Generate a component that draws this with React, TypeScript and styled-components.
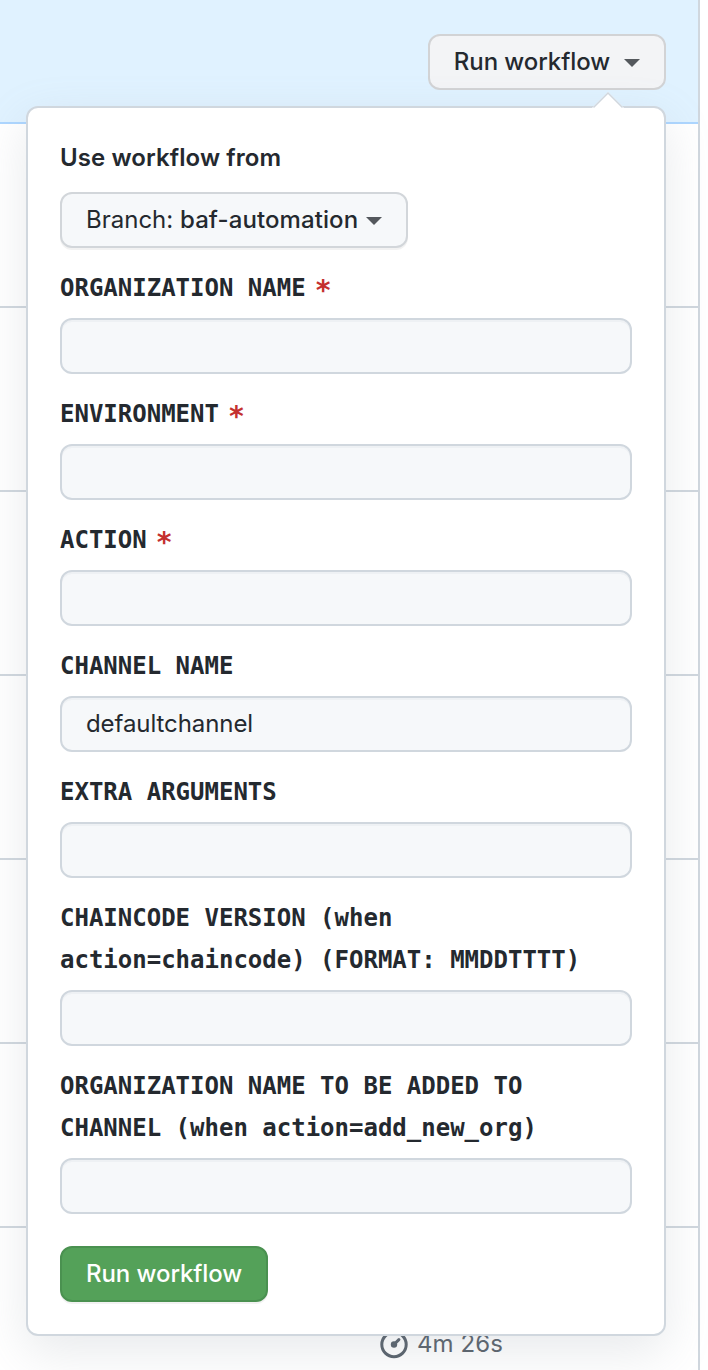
import React from "react";
import styled, { createGlobalStyle } from "styled-components";

const sans = `Inter, "Liberation Sans", sans-serif`;
const mono = `"DejaVu Sans Mono", "Liberation Mono", monospace`;

const GlobalStyle = createGlobalStyle`
  *, *::before, *::after { box-sizing: border-box; }
  body { margin: 0; background: #fff; color: #24292f; font: 24px/36px ${sans}; }
`;

const Page = styled.main`
  height: 1370px;
  overflow: hidden;
  padding-right: 8px;
`;

const RunList = styled.section`
  height: 1372px;
  border-right: 2px solid #d0d7de;
`;

const Banner = styled.header`
  position: relative;
  display: flex;
  justify-content: flex-end;
  align-items: flex-start;
  height: 124px;
  padding: 34px 32px 0 0;
  background: #e0f2ff;
  border-bottom: 2px solid #add6ff;
`;

const RunRow = styled.div`
  height: 184px;
  padding: 98px 0 0 380px;
  border-bottom: 2px solid #d0d7de;
`;

const Duration = styled.div`
  display: flex;
  align-items: center;
  gap: 9px;
  color: #57606a;
  letter-spacing: 0.1px;
`;

const Button = styled.button<{ $tone?: "muted" | "plain" | "primary" }>`
  display: flex;
  align-items: center;
  height: 56px;
  padding: 0 24px;
  border: 2px solid ${(p) => (p.$tone === "primary" ? "#4a9150" : p.$tone === "muted" ? "#d2d3d5" : "#d2d6da")};
  border-radius: 12px;
  background: ${(p) => (p.$tone === "primary" ? "#54a159" : p.$tone === "muted" ? "#f3f4f6" : "#f6f8fa")};
  box-shadow: ${(p) => (p.$tone === "muted" ? "none" : "0 2px 0 rgba(27, 31, 36, 0.06)")};
  color: ${(p) => (p.$tone === "primary" ? "#fff" : "#24292f")};
  font: ${(p) => (p.$tone === "plain" ? 400 : 500)} 24px/36px ${sans};
  letter-spacing: ${(p) => (p.$tone === "plain" ? 0 : -0.07)}px;
  white-space: pre;
`;

const BranchName = styled.span`
  font-weight: 500;
  letter-spacing: 0.1px;
`;

const Caret = styled.span<{ $gap: number }>`
  margin-left: ${(p) => p.$gap}px;
  border: 8px solid transparent;
  border-top-color: #54585d;
  border-bottom: 0;
  transform: translateY(1px);
`;

const Popover = styled.form`
  position: absolute;
  top: 106px;
  left: 26px;
  width: 640px;
  height: 1230px;
  padding: 32px;
  background: #fff;
  border: 2px solid #d0d7de;
  border-radius: 12px;
  box-shadow: 0 16px 48px rgba(140, 149, 159, 0.2);
`;

const Pointer = styled.svg`
  position: absolute;
  top: -16px;
  right: 40px;
`;

const Heading = styled.div`
  margin-bottom: 16px;
  font-weight: 600;
  letter-spacing: 0.09px;
`;

const Field = styled.label`
  display: block;
  margin-top: 19px;
`;

const FieldName = styled.span`
  display: block;
  margin-bottom: 9px;
  font: bold 24px/42px ${mono};
`;

const Required = styled.span`
  margin-left: 9px;
  color: #c4302f;
  font-size: 28px;
  line-height: 0;
  vertical-align: -4px;
`;

const Input = styled.input`
  display: block;
  width: 100%;
  height: 56px;
  padding: 0 24px 2px;
  border: 2px solid #d0d7de;
  border-radius: 12px;
  background: #f6f8fa;
  box-shadow: inset 0 2px 0 rgba(208, 215, 222, 0.2);
  color: #24292f;
  font: 24px/36px ${sans};
  letter-spacing: -0.08px;
`;

const Actions = styled.div`
  display: flex;
  margin-top: 32px;
`;

const fields = [
  { name: "ORGANIZATION NAME", required: true },
  { name: "ENVIRONMENT", required: true },
  { name: "ACTION", required: true },
  { name: "CHANNEL NAME", value: "defaultchannel" },
  { name: "EXTRA ARGUMENTS" },
  { name: "CHAINCODE VERSION (when action=chaincode) (FORMAT: MMDDTTTT)" },
  { name: "ORGANIZATION NAME TO BE ADDED TO CHANNEL (when action=add_new_org)" },
];

function StopwatchIcon() {
  return (
    <svg width="28" height="36" viewBox="0 0 28 36" fill="none">
      <circle cx="14" cy="18.500" r="12.200" stroke="currentColor" strokeWidth="3" />
      <circle cx="14" cy="18.500" r="3.200" fill="currentColor" />
      <path d="M14.500 18l4.400-4.400" stroke="currentColor" strokeWidth="3" strokeLinecap="round" />
    </svg>
  );
}

export default function App() {
  return (
    <Page>
      <GlobalStyle />
      <RunList>
        <Banner>
          <Button $tone="muted">
            Run workflow
            <Caret $gap={14} />
          </Button>
          <Popover>
            <Pointer width="32" height="18" viewBox="0 0 32 18">
              <path d="M0 16L16 0l16 16v2H0z" fill="#fff" />
              <path d="M1.500 15.500L16 1l14.500 14.500" fill="none" stroke="#d0d7de" strokeWidth="1.500" />
            </Pointer>
            <Heading>Use workflow from</Heading>
            <Button type="button" $tone="plain">
              {"Branch: "}
              <BranchName>baf-automation</BranchName>
              <Caret $gap={8} />
            </Button>
            {fields.map((field) => (
              <Field key={field.name}>
                <FieldName>
                  {field.name}
                  {field.required && <Required>*</Required>}
                </FieldName>
                <Input defaultValue={field.value} />
              </Field>
            ))}
            <Actions>
              <Button type="button" $tone="primary">Run workflow</Button>
            </Actions>
          </Popover>
        </Banner>
        {[1, 2, 3, 4, 5, 6].map((row) => (
          <RunRow key={row} />
        ))}
        <RunRow>
          <Duration>
            <StopwatchIcon />
            4m 26s
          </Duration>
        </RunRow>
      </RunList>
    </Page>
  );
}
